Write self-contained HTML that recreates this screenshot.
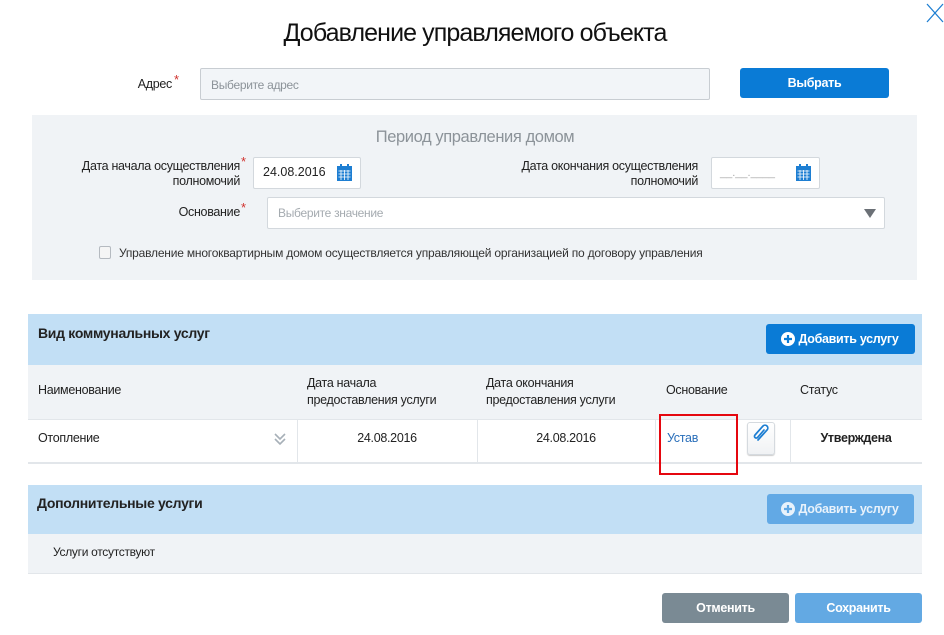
<!DOCTYPE html>
<html><head><meta charset="utf-8"><style>
*{margin:0;padding:0;box-sizing:border-box}
body{width:944px;height:635px;background:#fff;font-family:"Liberation Sans",Arial,sans-serif;color:#222;position:relative;overflow:hidden;font-size:12px}
.a{position:absolute;white-space:nowrap}
.inp{position:absolute;background:#fff;border:1px solid #d3d8dd;border-radius:2px}
.btn{position:absolute;color:#fff;font-weight:bold;font-size:12.5px;text-align:center;border-radius:3px;letter-spacing:-0.3px}
.r{text-align:right}
.star{position:absolute;color:#d0312d;font-size:13px}
.lbl{font-size:12.5px;letter-spacing:-0.3px;line-height:15px}
</style></head><body>
<div class="a" style="left:0;width:950px;top:19px;text-align:center;font-size:25px;letter-spacing:-0.9px;color:#111">Добавление управляемого объекта</div>
<svg class="a" style="left:926px;top:3px" width="18" height="20"><path d="M1 1L17 19M17 1L1 19" stroke="#1d7ed2" stroke-width="1.3"/></svg>

<div class="a lbl r" style="left:100px;width:72px;top:77px">Адрес</div><span class="star" style="left:174px;top:72px">*</span>
<div class="inp" style="left:200px;top:68px;width:510px;height:32px;background:#f2f5f8;border-color:#c8cdd2"></div>
<div class="a lbl" style="left:211px;top:78px;color:#8c9399;font-size:12px">Выберите адрес</div>
<div class="btn" style="left:740px;top:68px;width:149px;height:30px;line-height:30px;background:#0a7bd6">Выбрать</div>

<div class="a" style="left:32px;top:115px;width:885px;height:165px;background:#f0f3f6"></div>
<div class="a" style="left:0;width:950px;top:128px;text-align:center;font-size:16.5px;color:#8c9399;letter-spacing:-0.4px">Период управления домом</div>
<div class="a lbl r" style="left:40px;width:200px;top:159px">Дата начала осуществления<br>полномочий</div><span class="star" style="left:241px;top:154px">*</span>
<div class="inp" style="left:253px;top:157px;width:108px;height:32px"></div>
<div class="a" style="left:263px;top:165px;font-size:12.5px">24.08.2016</div>
<svg class="a" style="left:337px;top:164px" width="15" height="17"><rect x="0" y="2" width="15" height="15" fill="#1d7ed2"/><rect x="3" y="0" width="2" height="4" fill="#1d7ed2"/><rect x="10" y="0" width="2" height="4" fill="#1d7ed2"/><path d="M1.5 7h12M1.5 10h12M1.5 13h12M4 6v10M7.5 6v10M11 6v10" stroke="#fff" stroke-width=".8"/></svg>
<div class="a lbl r" style="left:460px;width:238px;top:159px">Дата окончания осуществления<br>полномочий</div>
<div class="inp" style="left:711px;top:157px;width:109px;height:32px"></div>
<div class="a" style="left:720px;top:167px;color:#aaa;font-size:11px">__.__.____</div>
<svg class="a" style="left:796px;top:164px" width="15" height="17"><rect x="0" y="2" width="15" height="15" fill="#1d7ed2"/><rect x="3" y="0" width="2" height="4" fill="#1d7ed2"/><rect x="10" y="0" width="2" height="4" fill="#1d7ed2"/><path d="M1.5 7h12M1.5 10h12M1.5 13h12M4 6v10M7.5 6v10M11 6v10" stroke="#fff" stroke-width=".8"/></svg>
<div class="a lbl r" style="left:100px;width:140px;top:205px">Основание</div><span class="star" style="left:241px;top:200px">*</span>
<div class="inp" style="left:267px;top:197px;width:618px;height:32px"></div>
<div class="a lbl" style="left:278px;top:206px;color:#a5abb0;font-size:12px">Выберите значение</div>
<svg class="a" style="left:864px;top:209px" width="12" height="9"><path d="M0 0h12L6 9z" fill="#6b7076"/></svg>
<div class="a" style="left:99px;top:246px;width:12px;height:13px;border:1px solid #b5bac0;border-radius:2px;background:#f5f5f5"></div>
<div class="a" style="left:119px;top:246px;font-size:12px;letter-spacing:-0.2px;color:#333">Управление многоквартирным домом осуществляется управляющей организацией по договору управления</div>

<div class="a" style="left:28px;top:314px;width:894px;height:51px;background:#c2dff5"></div>
<div class="a" style="left:38px;top:325px;font-size:14px;font-weight:bold;letter-spacing:-0.3px">Вид коммунальных услуг</div>
<div class="btn" style="left:766px;top:324px;width:149px;height:30px;line-height:30px;background:#0a7bd6;padding-left:16px">Добавить услугу</div>
<svg class="a" style="left:781px;top:332px" width="14" height="14"><circle cx="7" cy="7" r="7" fill="#fff"/><path d="M7 3v8M3 7h8" stroke="#0a7bd6" stroke-width="2.2"/></svg>
<div class="a" style="left:28px;top:365px;width:894px;height:54px;background:#f0f3f6"></div>
<div class="a lbl" style="left:38px;top:383px">Наименование</div>
<div class="a lbl" style="left:307px;top:375px;line-height:17px">Дата начала<br>предоставления услуги</div>
<div class="a lbl" style="left:486px;top:375px;line-height:17px">Дата окончания<br>предоставления услуги</div>
<div class="a lbl" style="left:666px;top:383px">Основание</div>
<div class="a lbl" style="left:800px;top:383px">Статус</div>
<div class="a" style="left:28px;top:419px;width:894px;height:45px;border:1px solid #e2e6ea;border-width:1px 0 2px 0;background:#fff"></div>
<div class="a" style="left:297px;top:420px;width:1px;height:43px;background:#e2e6ea"></div>
<div class="a" style="left:477px;top:420px;width:1px;height:43px;background:#e2e6ea"></div>
<div class="a" style="left:655px;top:420px;width:1px;height:43px;background:#e2e6ea"></div>
<div class="a" style="left:790px;top:420px;width:1px;height:43px;background:#e2e6ea"></div>
<div class="a lbl" style="left:38px;top:431px">Отопление</div>
<svg class="a" style="left:274px;top:433px" width="12" height="13"><path d="M1 1l5 5 5-5M1 6l5 5 5-5" stroke="#a7b0b8" stroke-width="1.6" fill="none"/></svg>
<div class="a lbl" style="left:297px;width:180px;text-align:center;top:431px">24.08.2016</div>
<div class="a lbl" style="left:477px;width:178px;text-align:center;top:431px">24.08.2016</div>
<div class="a lbl" style="left:667px;top:431px;color:#2a6fba">Устав</div>
<div class="a" style="left:747px;top:422px;width:28px;height:33px;border:1px solid #d5dadf;border-radius:3px;background:linear-gradient(#fff,#f0f2f4);box-shadow:0 1px 1px #ccc"></div>
<svg class="a" style="left:752px;top:424px" width="19" height="19"><path d="M6 16L15 6a2.6 2.6 0 0 0-4-4L3 11a1.7 1.7 0 0 0 2.5 2.5L12 6" stroke="#1d7ed2" stroke-width="1.7" fill="none" stroke-linecap="round"/></svg>
<div class="a lbl" style="left:790px;width:132px;text-align:center;top:431px;font-weight:bold">Утверждена</div>
<div class="a" style="left:659px;top:414px;width:79px;height:61px;border:2px solid #e5070f"></div>

<div class="a" style="left:28px;top:485px;width:894px;height:49px;background:#c2dff5"></div>
<div class="a" style="left:37px;top:495px;font-size:14px;font-weight:bold;letter-spacing:-0.3px">Дополнительные услуги</div>
<div class="btn" style="left:767px;top:494px;width:147px;height:30px;line-height:30px;background:#62a9e5;padding-left:16px;color:#e8f2fb">Добавить услугу</div>
<svg class="a" style="left:781px;top:502px" width="14" height="14"><circle cx="7" cy="7" r="7" fill="#e8f2fb"/><path d="M7 3v8M3 7h8" stroke="#62a9e5" stroke-width="2.2"/></svg>
<div class="a" style="left:28px;top:534px;width:894px;height:40px;background:#f0f3f6;border-bottom:1px solid #e2e6ea"></div>
<div class="a" style="left:53px;top:545px;font-size:12px;letter-spacing:-0.3px">Услуги отсутствуют</div>

<div class="btn" style="left:662px;top:593px;width:127px;height:30px;line-height:30px;background:#7a8a94">Отменить</div>
<div class="btn" style="left:795px;top:593px;width:127px;height:30px;line-height:30px;background:#63a9e3">Сохранить</div>
</body></html>
